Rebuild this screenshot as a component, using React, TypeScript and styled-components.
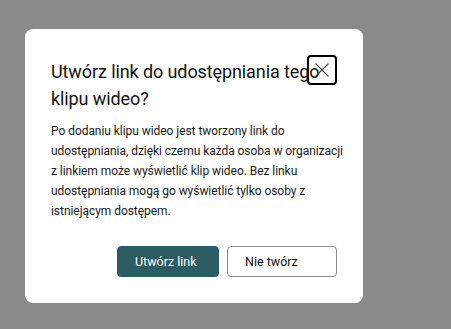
import styled, { createGlobalStyle } from "styled-components";

const Global = createGlobalStyle`
  html, body {
    margin: 0;
    padding: 0;
    background: #8a8a8a;
  }
  body {
    font-family: Roboto, "Liberation Sans", sans-serif;
  }
`;

const Backdrop = styled.div`
  width: 451px;
  height: 329px;
  padding: 29px 0 0 25px;
  box-sizing: border-box;
`;

const Dialog = styled.div`
  position: relative;
  width: 338px;
  height: 274px;
  box-sizing: border-box;
  background: #fff;
  border-radius: 8px;
  padding: 29px 20px 26px 26px;
  display: flex;
  flex-direction: column;
`;

const Title = styled.h2`
  margin: 0;
  font-size: 18px;
  font-weight: 400;
  line-height: 27px;
  letter-spacing: -0.1px;
  color: #111;
`;

const CloseButton = styled.button`
  position: absolute;
  top: 26px;
  right: 26px;
  width: 30px;
  height: 30px;
  padding: 0;
  box-sizing: border-box;
  border: 2px solid #000;
  border-radius: 4px;
  background: transparent;
  display: flex;
  align-items: center;
  justify-content: center;
`;

const Body = styled.p`
  margin: 9px 0 0;
  font-size: 12px;
  line-height: 20px;
  letter-spacing: -0.05px;
  color: #1b1b1b;
`;

const Actions = styled.div`
  margin-top: auto;
  display: flex;
  justify-content: flex-end;
  gap: 8px;
  padding-right: 6px;
`;

const Button = styled.button<{ $primary?: boolean; $w: number }>`
  width: ${(p) => p.$w}px;
  height: 31px;
  box-sizing: border-box;
  border-radius: 4px;
  padding: 0 0 0 17px;
  text-align: left;
  font-family: Roboto, "Liberation Sans", sans-serif;
  font-size: 12.5px;
  border: 1px solid ${(p) => (p.$primary ? "#2c5c63" : "#8a8a8a")};
  background: ${(p) => (p.$primary ? "#2c5c63" : "#fff")};
  color: ${(p) => (p.$primary ? "#fff" : "#111")};
`;

export default function App() {
  return (
    <>
      <Global />
      <Backdrop>
        <Dialog>
          <Title>Utwórz link do udostępniania tego klipu wideo?</Title>
          <CloseButton aria-label="Zamknij">
            <svg width="16" height="16" viewBox="0 0 16 16">
              <path d="M1.5 1.5 L14.5 14.5 M14.5 1.5 L1.5 14.5" stroke="#444" strokeWidth="1.1" fill="none" />
            </svg>
          </CloseButton>
          <Body>
            Po dodaniu klipu wideo jest tworzony link do udostępniania, dzięki czemu każda osoba w organizacji z
            linkiem może wyświetlić klip wideo. Bez linku udostępniania mogą go wyświetlić tylko osoby z
            istniejącym dostępem.
          </Body>
          <Actions>
            <Button $primary $w={102}>Utwórz link</Button>
            <Button $w={110}>Nie twórz</Button>
          </Actions>
        </Dialog>
      </Backdrop>
    </>
  );
}
